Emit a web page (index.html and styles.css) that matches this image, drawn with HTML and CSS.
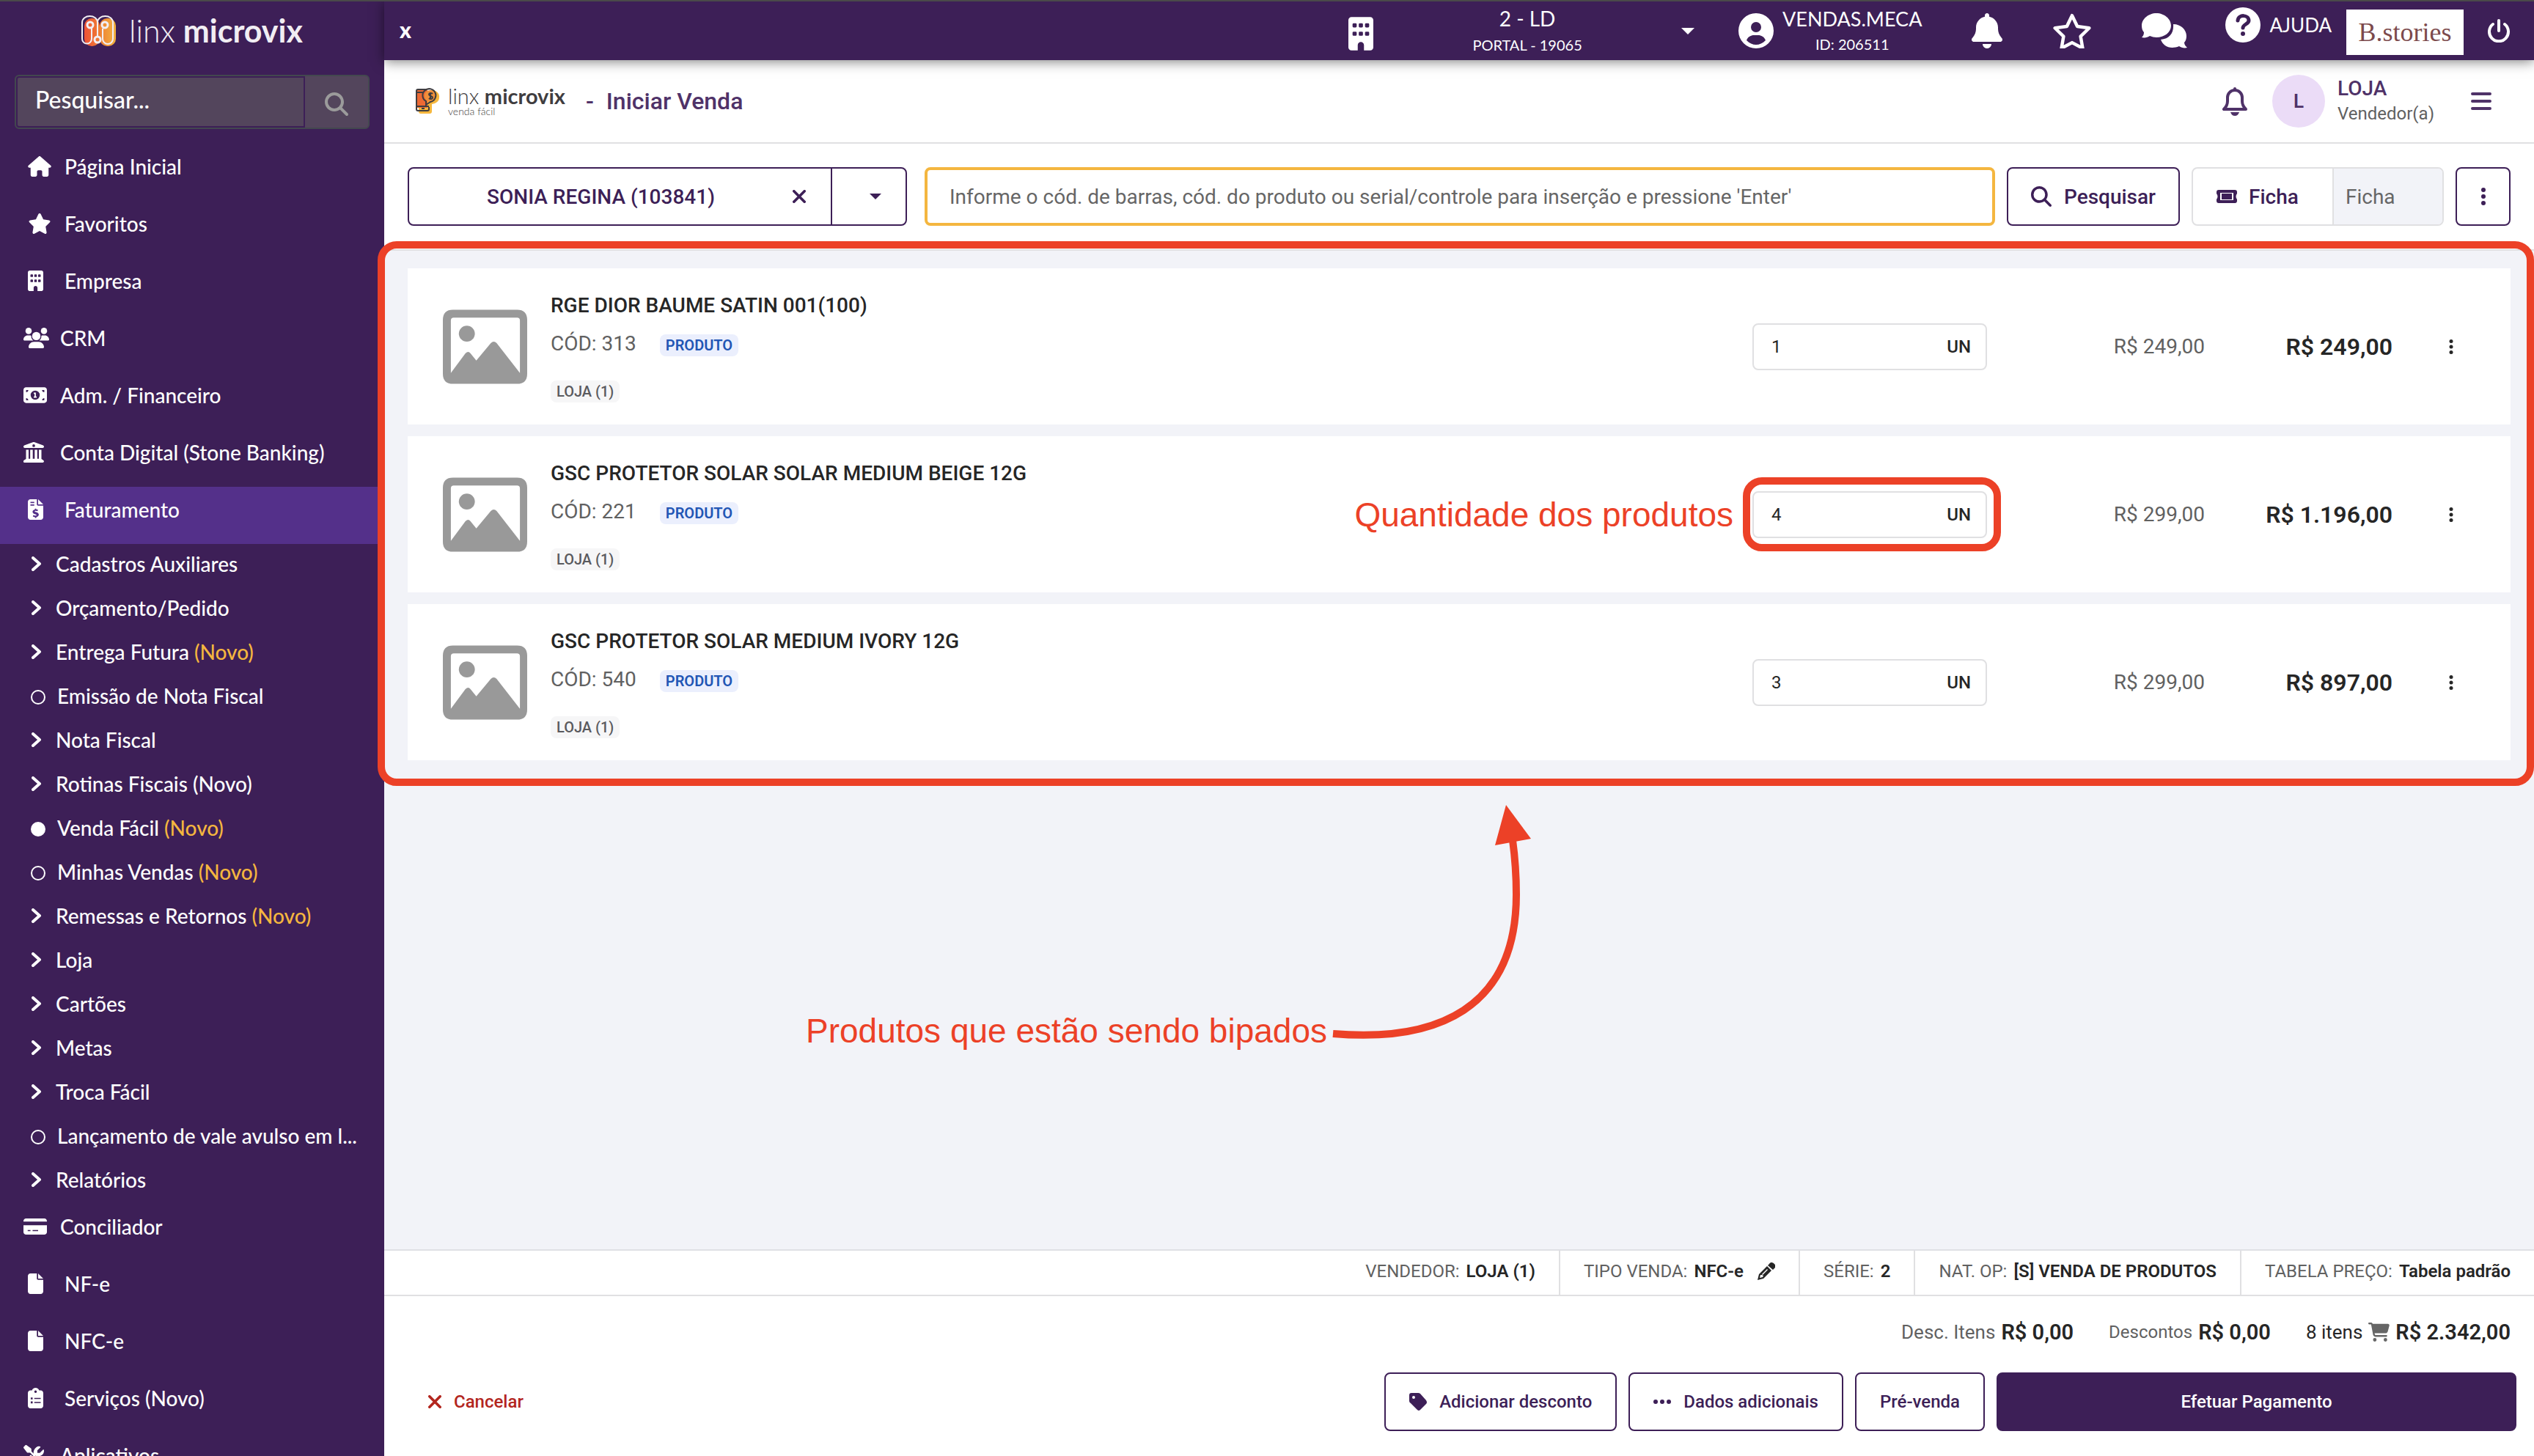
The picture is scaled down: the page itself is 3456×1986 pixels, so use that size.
FILE: index.html
```html
<!DOCTYPE html>
<html lang="pt-BR">
<head>
<meta charset="utf-8">
<title>Linx Microvix - Iniciar Venda</title>
<link rel="stylesheet" href="styles.css">
</head>
<body>
<svg class="sprite" aria-hidden="true">
  <symbol id="i-house" viewBox="0 0 576 512"><path d="M575.8 255.500c0 18-15 32.100-32 32.100h-32l.7 160.200c0 2.700-.2 5.400-.5 8.100V472c0 22.100-17.900 40-40 40H392c-22.100 0-40-17.900-40-40V384c0-17.700-14.300-32-32-32h-64c-17.700 0-32 14.300-32 32v88c0 22.100-17.900 40-40 40h-80c-22.100 0-40-17.900-40-40V287.600H32c-18 0-32-14-32-32.100 0-9 3-17 10-24L266.400 8c7-7 15-8 22-8s15 2 21 7L564.800 231.500c8 7 12 15 11 24z"/></symbol>
  <symbol id="i-star" viewBox="0 0 576 512"><path d="M316.900 18C311.600 7 300.400 0 288.100 0s-23.400 7-28.800 18L195 150.300 51.400 171.500c-12 1.800-22 10.200-25.700 21.700s-.7 24.200 7.900 32.700L137.800 329l-24.600 145.700c-2 12 3 24.200 12.900 31.300s23 8 33.800 2.300l128.300-68.500 128.300 68.500c10.800 5.700 23.900 4.900 33.800-2.300s14.900-19.300 12.900-31.300L438.500 329l104.200-103.100c8.600-8.500 11.700-21.200 7.900-32.700s-13.700-19.900-25.700-21.700l-143.700-21.200z"/></symbol>
  <symbol id="i-star-o" viewBox="0 0 576 512"><path d="M288 34l76 157 173 25-125 122 30 172-154-82-154 82 30-172L39 216l173-25z" fill="none" stroke="currentColor" stroke-width="48" stroke-linejoin="round"/></symbol>
  <symbol id="i-building" viewBox="0 0 384 512"><path fill-rule="evenodd" d="M48 0h288c26 0 48 22 48 48v416c0 26-22 48-48 48h-96v-80c0-26-22-48-48-48s-48 22-48 48v80H48c-26 0-48-22-48-48V48C0 22 22 0 48 0zM80 96h32q16 0 16 16v32q0 16-16 16H80q-16 0-16-16v-32q0-16 16-16zM176 96h32q16 0 16 16v32q0 16-16 16h-32q-16 0-16-16v-32q0-16 16-16zM272 96h32q16 0 16 16v32q0 16-16 16h-32q-16 0-16-16v-32q0-16 16-16zM80 224h32q16 0 16 16v32q0 16-16 16H80q-16 0-16-16v-32q0-16 16-16zM176 224h32q16 0 16 16v32q0 16-16 16h-32q-16 0-16-16v-32q0-16 16-16zM272 224h32q16 0 16 16v32q0 16-16 16h-32q-16 0-16-16v-32q0-16 16-16z"/></symbol>
  <symbol id="i-users" viewBox="0 0 640 512"><circle cx="128" cy="80" r="78"/><circle cx="512" cy="80" r="78"/><circle cx="320" cy="208" r="104"/><path d="M0 298c0-59 48-106 107-106h42c16 0 31 3 45 9-4 40 6 84 52 119H21c-12 0-21-10-21-22zM640 298c0-59-48-106-107-106h-42c-16 0-31 3-45 9 4 40-6 84-52 119h225c12 0 21-10 21-22zM128 485c0-73 60-133 133-133h117c74 0 134 60 134 133 0 15-12 27-27 27H155c-15 0-27-12-27-27z"/></symbol>
  <symbol id="i-money" viewBox="0 0 576 384"><path fill-rule="evenodd" d="M64 0h448c35 0 64 29 64 64v256c0 35-29 64-64 64H64c-35 0-64-29-64-64V64C0 29 29 0 64 0zM64 64v56c31 0 56-25 56-56zM64 320h56c0-31-25-56-56-56zM512 64h-56c0 31 25 56 56 56zM512 264c-31 0-56 25-56 56h56zM288 80a112 112 0 1 0 0 224 112 112 0 1 0 0-224zM252 128h52v96h20v32h-72v-32h20v-64h-20z"/></symbol>
  <symbol id="i-bank" viewBox="0 0 512 512"><path fill-rule="evenodd" d="M244 2q12-4 24 0l224 80c32 14 24 62-12 62H32C-4 144-12 96 20 82zM256 56a34 34 0 1 0 0 68 34 34 0 1 0 0-68zM64 192h64v224h40V192h64v224h48V192h64v224h40V192h64v228l46 32c34 26 10 60-14 60H24c-30 0-38-40-10-58l50-34z"/></symbol>
  <symbol id="i-invoice" viewBox="0 0 384 512"><path fill-rule="evenodd" d="M64 0h160v128c0 18 14 32 32 32h128v288c0 35-29 64-64 64H64c-35 0-64-29-64-64V64C0 29 29 0 64 0zM256 0l128 128H256zM64 64v32h96V64zM64 128v32h96v-32zM176 232v24c-84 20-76 104 12 118 40 8 30 34 4 34-22 0-44-10-56-16l-12 36c16 8 32 12 52 16v24h36v-24c92-22 74-110-8-124-50-10-36-34-8-32 16 0 32 6 46 10l10-38c-12-4-28-8-44-10v-18z"/></symbol>
  <symbol id="i-file" viewBox="0 0 384 512"><path d="M0 64C0 29 29 0 64 0h160v128c0 18 14 32 32 32h128v288c0 35-29 64-64 64H64c-35 0-64-29-64-64zM384 128H256V0z"/></symbol>
  <symbol id="i-clip" viewBox="0 0 384 512"><path fill-rule="evenodd" d="M192 0c42 0 77 27 90 64h38c35 0 64 29 64 64v320c0 35-29 64-64 64H64c-35 0-64-29-64-64V128c0-35 29-64 64-64h38c13-37 48-64 90-64zM192 64a32 32 0 1 0 0 64 32 32 0 1 0 0-64zM72 240v48h48v-48zM160 252v28h160v-28zM72 340v48h48v-48zM160 352v28h160v-28z"/></symbol>
  <symbol id="i-card" viewBox="0 0 576 400"><path fill-rule="evenodd" d="M64 0h448c35 0 64 29 64 64v16H0V64C0 29 29 0 64 0zM0 170h576v166c0 35-29 64-64 64H64c-35 0-64-29-64-64zM104 286v28h68v-28zM224 286v28h136v-28z"/></symbol>
  <symbol id="i-tools" viewBox="0 0 512 512"><path d="M78 6c-12-8-24-8-34 2L8 44c-8 10-10 24-2 34l80 104c6 8 16 12 26 12h54l104 104c-14 30-10 66 14 92l112 112c18 18 46 18 64 0l46-46c18-18 18-46 0-64L394 280c-26-24-62-28-92-14L198 162v-54c0-10-4-20-12-26z"/><path d="M506 110c6 22 8 46 2 70-16 62-72 102-132 96-28-20-62-26-94-20l-32-32c-4-66 14-130 72-170 34-24 62-24 96-14 8 2 10 12 4 18l-76 76v64h64l76-78c6-6 18-4 20-10zM20 396l164-154 76 76-140 172c-30 28-72 28-98 0s-28-66-2-94z"/></symbol>
  <symbol id="i-search" viewBox="0 0 512 512"><path d="M416 208c0 45.900-14.900 88.300-40 122.700l126.600 126.700c12.500 12.500 12.500 32.800 0 45.300s-32.800 12.500-45.300 0L330.700 376c-34.400 25.200-76.800 40-122.700 40C93.100 416 0 322.900 0 208S93.100 0 208 0s208 93.100 208 208zM208 352a144 144 0 1 0 0-288 144 144 0 1 0 0 288z"/></symbol>
  <symbol id="i-chev" viewBox="0 0 14 20"><path d="M2 2l9 8-9 8" fill="none" stroke="currentColor" stroke-width="4" stroke-linecap="round" stroke-linejoin="round"/></symbol>
  <symbol id="i-caret" viewBox="0 0 18 9"><path d="M0 0h18l-9 9z"/></symbol>
  <symbol id="i-x" viewBox="0 0 20 20"><path d="M2 2l16 16M18 2L2 18" fill="none" stroke="currentColor" stroke-width="4" stroke-linecap="round"/></symbol>
  <symbol id="i-user" viewBox="0 0 48 48"><path fill-rule="evenodd" d="M24 0a24 24 0 1 1 0 48 24 24 0 1 1 0-48zM24 12a7 7 0 1 0 0 14 7 7 0 1 0 0-14zM11 37c8 8 18 8 26 0-2-5-6-7-10-7h-6c-4 0-8 2-10 7z"/></symbol>
  <symbol id="i-bell" viewBox="0 0 448 512"><path d="M224 0c-17.700 0-32 14.300-32 32v19.200C119 66 64 130.600 64 208v18.800c0 47-17.300 92.400-48.500 127.600l-7.400 8.300c-8.400 9.400-10.400 22.900-5.300 34.400S19.400 416 32 416h384c12.600 0 24-7.400 29.200-18.900s3.100-25-5.300-34.400l-7.400-8.300C401.300 319.200 384 273.900 384 226.800V208c0-77.400-55-142-128-156.800V32c0-17.700-14.300-32-32-32zM269.300 493.300c12-12 18.700-28.300 18.700-45.300H160c0 17 6.700 33.300 18.700 45.300s28.300 18.700 45.300 18.700 33.300-6.700 45.300-18.700z"/></symbol>
  <symbol id="i-bell-o" viewBox="0 0 36 40"><path d="M18 3v2M18 5c-6 0-10 5-10 10v5c0 5-2 8-5 11h30c-3-3-5-6-5-11v-5c0-5-4-10-10-10z" fill="none" stroke="currentColor" stroke-width="4" stroke-linejoin="round" stroke-linecap="round"/><path d="M12 35h12c-1 3-3 5-6 5s-5-2-6-5z"/></symbol>
  <symbol id="i-chat" viewBox="0 0 62 48"><path d="M20 0c11 0 20 8 20 17s-9 16-20 16c-3 0-6-1-9-2-3 2-7 3-11 2 2-2 3-4 3-7C1 24 0 21 0 17 0 8 9 0 20 0z"/><path d="M43 15c11 0 18 8 18 16 0 4-1 7-3 9 0 3 2 5 4 7-4 1-8 0-11-2-12 5-22 0-25-9 12-1 18-9 17-21z"/></symbol>
  <symbol id="i-help" viewBox="0 0 48 48"><circle cx="24" cy="24" r="24"/><path d="M17 18c1-9 15-8 15 0 0 5-8 5-8 10" fill="none" stroke="#3d1f57" stroke-width="5" stroke-linecap="round"/><circle cx="24" cy="36" r="3" fill="#3d1f57"/></symbol>
  <symbol id="i-power" viewBox="0 0 32 32"><path d="M16 2v14M8 7a13 13 0 1 0 16 0" fill="none" stroke="currentColor" stroke-width="4" stroke-linecap="round"/></symbol>
  <symbol id="i-menu" viewBox="0 0 28 24"><path d="M2 2h24M2 12h24M2 22h24" stroke="currentColor" stroke-width="4" stroke-linecap="round"/></symbol>
  <symbol id="i-kebab" viewBox="0 0 6 24"><circle cx="3" cy="3" r="3"/><circle cx="3" cy="12" r="3"/><circle cx="3" cy="21" r="3"/></symbol>
  <symbol id="i-dots" viewBox="0 0 24 6"><circle cx="3" cy="3" r="3"/><circle cx="12" cy="3" r="3"/><circle cx="21" cy="3" r="3"/></symbol>
  <symbol id="i-ticket" viewBox="0 0 28 18"><path fill-rule="evenodd" d="M3 0h22q3 0 3 3v2q-3 4 0 8v2q0 3-3 3H3q-3 0-3-3v-2q3-4 0-8V3q0-3 3-3zM5 4v10h18V4zM7 5h14v8H7z"/></symbol>
  <symbol id="i-image" viewBox="0 0 116 102"><path fill-rule="evenodd" d="M14 0h88q14 0 14 14v74q0 14-14 14H14Q0 102 0 88V14Q0 0 14 0zM15 11q-4 0-4 4v72l20-27q4-4 7 0l8 10 20-24q4-4 8 0l32 41V15q0-4-4-4z"/><circle cx="33" cy="33" r="11"/></symbol>
  <symbol id="i-pencil" viewBox="0 0 24 24"><path fill-rule="evenodd" d="M16 2c2-3 5-2 7 0s2 4 0 6l-2 2-7-6zM13 5l6 6L8 22l-8 2 2-8zM4 17l-1 4 4-1 1-2-2-1zM13 9l-7 7 1 1 7-7z"/></symbol>
  <symbol id="i-tag" viewBox="0 0 24 24"><path fill-rule="evenodd" d="M0 3q0-3 3-3h9q2 0 3 1l8 9q2 3 0 5l-8 8q-2 2-4 0l-9-9q-2-1-2-3zM6 4a2 2 0 1 0 0 4 2 2 0 1 0 0-4z"/></symbol>
  <symbol id="i-cart" viewBox="0 0 576 512"><path d="M0 24C0 10.700 10.700 0 24 0h45.500c22 0 41.500 12.800 50.600 32h411c26.300 0 45.500 25 38.600 50.400l-41 152.300c-8.500 31.400-37 53.300-69.500 53.300H170.700l5.400 28.500c2.200 11.300 12.100 19.500 23.600 19.500H488c13.300 0 24 10.700 24 24s-10.700 24-24 24H199.700c-34.600 0-64.300-24.600-70.700-58.500L77.400 54.500c-.7-3.800-4-6.500-7.900-6.500H24C10.700 48 0 37.300 0 24zM128 464a48 48 0 1 1 96 0 48 48 0 1 1-96 0zM464 416a48 48 0 1 1 0 96 48 48 0 1 1 0-96z"/></symbol>
</svg>

<aside class="sidebar">
  <a class="brand" href="#">
    <svg class="brand-mark" viewBox="0 0 48 44" aria-hidden="true">
      <defs>
        <linearGradient id="g1"><stop offset="0" stop-color="#ee5136"/><stop offset="1" stop-color="#ef7d35"/></linearGradient>
        <linearGradient id="g2"><stop offset="0" stop-color="#ee8035"/><stop offset="1" stop-color="#f3b33f"/></linearGradient>
      </defs>
      <rect x="5" y="5" width="21" height="38" rx="10" fill="url(#g1)"/>
      <rect x="26" y="5" width="22" height="38" rx="10" fill="url(#g2)"/>
      <g fill="none" stroke="#f1eef3" stroke-width="2">
        <path d="M15 19v14a6 6 0 0 1-13 0V11C2-1 23-1 23 11v18M23 11c0-12 21-12 21 0v22a6 6 0 0 1-14 0V19"/>
        <circle cx="13" cy="14" r="4" stroke-width="3"/><circle cx="33" cy="14" r="4" stroke-width="3"/><circle cx="23" cy="34" r="4" stroke-width="3"/>
      </g>
    </svg>
    <span class="brand-name"><span class="thin">linx</span> <b>microvix</b></span>
  </a>
  <form class="side-search">
    <input type="text" placeholder="Pesquisar..." aria-label="Pesquisar no menu">
    <button type="button" aria-label="Buscar"><svg><use href="#i-search"/></svg></button>
  </form>
  <nav>
    <ul class="menu">
      <li><a href="#"><svg style="width:32px"><use href="#i-house"/></svg>Página Inicial</a></li>
      <li><a href="#"><svg style="width:32px"><use href="#i-star"/></svg>Favoritos</a></li>
      <li><a href="#"><svg style="width:21px"><use href="#i-building"/></svg>Empresa</a></li>
      <li><a class="wide" href="#"><svg style="width:35px"><use href="#i-users"/></svg>CRM</a></li>
      <li><a class="wide" href="#"><svg style="width:32px"><use href="#i-money"/></svg>Adm. / Financeiro</a></li>
      <li><a class="wide" href="#"><svg style="width:28px"><use href="#i-bank"/></svg>Conta Digital (Stone Banking)</a></li>
      <li><a class="active" href="#"><svg style="width:21px"><use href="#i-invoice"/></svg>Faturamento</a>
        <ul class="submenu">
          <li><a href="#"><svg><use href="#i-chev"/></svg>Cadastros Auxiliares</a></li>
          <li><a href="#"><svg><use href="#i-chev"/></svg>Orçamento/Pedido</a></li>
          <li><a href="#"><svg><use href="#i-chev"/></svg><span>Entrega Futura <em>(Novo)</em></span></a></li>
          <li><a class="leaf" href="#"><i></i>Emissão de Nota Fiscal</a></li>
          <li><a href="#"><svg><use href="#i-chev"/></svg>Nota Fiscal</a></li>
          <li><a href="#"><svg><use href="#i-chev"/></svg>Rotinas Fiscais (Novo)</a></li>
          <li><a class="leaf current" href="#"><i></i><span>Venda Fácil <em>(Novo)</em></span></a></li>
          <li><a class="leaf" href="#"><i></i><span>Minhas Vendas <em>(Novo)</em></span></a></li>
          <li><a href="#"><svg><use href="#i-chev"/></svg><span>Remessas e Retornos <em>(Novo)</em></span></a></li>
          <li><a href="#"><svg><use href="#i-chev"/></svg>Loja</a></li>
          <li><a href="#"><svg><use href="#i-chev"/></svg>Cartões</a></li>
          <li><a href="#"><svg><use href="#i-chev"/></svg>Metas</a></li>
          <li><a href="#"><svg><use href="#i-chev"/></svg>Troca Fácil</a></li>
          <li><a class="leaf" href="#"><i></i>Lançamento de vale avulso em l...</a></li>
          <li><a href="#"><svg><use href="#i-chev"/></svg>Relatórios</a></li>
        </ul>
      </li>
      <li><a class="wide" href="#"><svg style="width:32px"><use href="#i-card"/></svg>Conciliador</a></li>
      <li><a href="#"><svg style="width:21px"><use href="#i-file"/></svg>NF-e</a></li>
      <li><a href="#"><svg style="width:21px"><use href="#i-file"/></svg>NFC-e</a></li>
      <li><a href="#"><svg style="width:21px"><use href="#i-clip"/></svg>Serviços (Novo)</a></li>
      <li><a class="wide" href="#"><svg style="width:28px"><use href="#i-tools"/></svg>Aplicativos</a></li>
    </ul>
  </nav>
</aside>

<div class="page">
  <header class="topbar">
    <button class="collapse" type="button">x</button>
    <button class="company" type="button">
      <svg class="ic-building"><use href="#i-building"/></svg>
      <span class="two-lines"><span>2 - LD</span><small>PORTAL - 19065</small></span>
      <svg class="ic-caret"><use href="#i-caret"/></svg>
    </button>
    <a class="user" href="#">
      <svg class="ic-round"><use href="#i-user"/></svg>
      <span class="two-lines"><span>VENDAS.MECA</span><small>ID: 206511</small></span>
    </a>
    <a class="tool" href="#" aria-label="Notificações"><svg style="width:42px"><use href="#i-bell"/></svg></a>
    <a class="tool" href="#" aria-label="Favoritos"><svg style="width:54px"><use href="#i-star-o"/></svg></a>
    <a class="tool" href="#" aria-label="Mensagens"><svg style="width:62px"><use href="#i-chat"/></svg></a>
    <a class="help" href="#"><svg class="ic-round"><use href="#i-help"/></svg>AJUDA</a>
    <span class="client-logo">B.stories</span>
    <a class="power" href="#" aria-label="Sair"><svg><use href="#i-power"/></svg></a>
  </header>

  <header class="titlebar">
    <svg class="app-mark" viewBox="0 0 32 34" aria-hidden="true">
      <path d="M4 3h15a9 9 0 0 1 13 9c0 5-4 8-10 9v10q0 3-3 3H7q-3 0-3-3z" fill="#f6b73d"/>
      <path d="M2 1h14v25H2z" fill="#ec6a34"/>
      <circle cx="20" cy="10" r="8" fill="#f0903a"/>
      <path d="M14 1H3Q1 1 1 3v25q0 2 2 2h13q2 0 2-2v-3M1 5h9M1 24h17M8 27h4M14 22v-5A9 9 0 1 1 20 18zM23 7c-2-2-5-1-5 1s5 2 5 4-3 3-5 1M20 5v10" fill="none" stroke="#3f3d40" stroke-width="2"/>
    </svg>
    <span class="app-name"><span><span class="thin">linx</span> <b>microvix</b></span><small>venda fácil</small></span>
    <h1><span>-</span>Iniciar Venda</h1>
    <button class="bare" type="button" aria-label="Avisos"><svg class="ic-bell"><use href="#i-bell-o"/></svg></button>
    <span class="avatar">L</span>
    <span class="seller"><strong>LOJA</strong><small>Vendedor(a)</small></span>
    <button class="bare" type="button" aria-label="Menu"><svg class="ic-menu"><use href="#i-menu"/></svg></button>
  </header>

  <div class="toolbar">
    <div class="customer">
      <button class="customer-name" type="button"><span>SONIA REGINA (103841)</span><svg class="ic-x"><use href="#i-x"/></svg></button>
      <button class="customer-more" type="button" aria-label="Opções do cliente"><svg><use href="#i-caret"/></svg></button>
    </div>
    <input class="barcode" type="text" aria-label="Código do produto" placeholder="Informe o cód. de barras, cód. do produto ou serial/controle para inserção e pressione 'Enter'">
    <button class="btn btn-search" type="button"><svg><use href="#i-search"/></svg>Pesquisar</button>
    <div class="ficha">
      <label for="ficha"><svg><use href="#i-ticket"/></svg>Ficha</label>
      <input id="ficha" type="text" placeholder="Ficha">
    </div>
    <button class="btn btn-kebab" type="button" aria-label="Mais"><svg><use href="#i-kebab"/></svg></button>
  </div>

  <main class="workspace">
    <section class="products">
      <article class="product">
        <svg class="thumb"><use href="#i-image"/></svg>
        <div class="info">
          <h2>RGE DIOR BAUME SATIN 001(100)</h2>
          <p><span>CÓD: 313</span><span class="badge">PRODUTO</span></p>
          <span class="store">LOJA (1)</span>
        </div>
        <label class="qty"><input type="text" value="1" aria-label="Quantidade"><span>UN</span></label>
        <span class="unit-price">R$ 249,00</span>
        <strong class="total-price">R$ 249,00</strong>
        <button class="bare" type="button" aria-label="Opções do item"><svg class="ic-kebab"><use href="#i-kebab"/></svg></button>
      </article>
      <article class="product">
        <svg class="thumb"><use href="#i-image"/></svg>
        <div class="info">
          <h2>GSC PROTETOR SOLAR SOLAR MEDIUM BEIGE 12G</h2>
          <p><span>CÓD: 221</span><span class="badge">PRODUTO</span></p>
          <span class="store">LOJA (1)</span>
        </div>
        <div class="marked">
          <label class="qty"><input type="text" value="4" aria-label="Quantidade"><span>UN</span></label>
          <div class="ring ring-qty"></div>
          <span class="note note-qty">Quantidade dos produtos</span>
        </div>
        <span class="unit-price">R$ 299,00</span>
        <strong class="total-price">R$ 1.196,00</strong>
        <button class="bare" type="button" aria-label="Opções do item"><svg class="ic-kebab"><use href="#i-kebab"/></svg></button>
      </article>
      <article class="product">
        <svg class="thumb"><use href="#i-image"/></svg>
        <div class="info">
          <h2>GSC PROTETOR SOLAR MEDIUM IVORY 12G</h2>
          <p><span>CÓD: 540</span><span class="badge">PRODUTO</span></p>
          <span class="store">LOJA (1)</span>
        </div>
        <label class="qty"><input type="text" value="3" aria-label="Quantidade"><span>UN</span></label>
        <span class="unit-price">R$ 299,00</span>
        <strong class="total-price">R$ 897,00</strong>
        <button class="bare" type="button" aria-label="Opções do item"><svg class="ic-kebab"><use href="#i-kebab"/></svg></button>
      </article>
      <div class="ring ring-list"></div>
      <div class="callout">
        <span class="note">Produtos que estão sendo bipados</span>
        <svg class="arrow" viewBox="0 0 280 330" aria-hidden="true">
          <path d="M8 312C150 324 258 278 258 122C258 96 256 70 253 48" fill="none" stroke="#ec4127" stroke-width="10"/>
          <path d="M244 0l34 46-49 9z" fill="#ec4127"/>
        </svg>
      </div>
    </section>
  </main>

  <footer class="footer">
    <dl class="facts">
      <div><dt>VENDEDOR:</dt><dd>LOJA (1)</dd></div>
      <div><dt>TIPO VENDA:</dt><dd>NFC-e</dd><svg><use href="#i-pencil"/></svg></div>
      <div><dt>SÉRIE:</dt><dd>2</dd></div>
      <div><dt>NAT. OP:</dt><dd>[S] VENDA DE PRODUTOS</dd></div>
      <div><dt>TABELA PREÇO:</dt><dd>Tabela padrão</dd></div>
    </dl>
    <dl class="totals">
      <div><dt class="lg">Desc. Itens</dt><dd>R$ 0,00</dd></div>
      <div><dt>Descontos</dt><dd>R$ 0,00</dd></div>
      <div><dt class="lg dark">8 itens</dt><svg><use href="#i-cart"/></svg><dd>R$ 2.342,00</dd></div>
    </dl>
    <div class="actions">
      <button class="cancel" type="button"><svg><use href="#i-x"/></svg>Cancelar</button>
      <button class="btn" type="button"><svg class="ic-tag"><use href="#i-tag"/></svg>Adicionar desconto</button>
      <button class="btn" type="button"><svg class="ic-dots"><use href="#i-dots"/></svg>Dados adicionais</button>
      <button class="btn" type="button">Pré-venda</button>
      <button class="btn btn-pay" type="button">Efetuar Pagamento</button>
    </div>
  </footer>
</div>
</body>
</html>
```
FILE: styles.css
```css
:root {
  --purple: #3d1f57;
  --plum: #4f3268;
  --red: #ec4127;
  --line: #e0e0e2;
  --grey: #616161;
  --ink: #262626;
  --canvas: #f2f3f8;
}
* { box-sizing: border-box; }
body {
  margin: 0;
  height: 100vh;
  overflow: hidden;
  display: grid;
  grid-template-columns: 524px 1fr;
  border-top: 2px solid #4a4a4a;
  background: #fff;
  color: var(--ink);
  font-family: Roboto, "Liberation Sans", sans-serif;
  font-size: 28px;
}
button, input { font: inherit; color: inherit; }
button { background: none; border: 0; padding: 0; display: flex; align-items: center; justify-content: center; }
a { color: inherit; text-decoration: none; }
ul, dl, dd, h1, h2, p { margin: 0; padding: 0; list-style: none; }
svg { fill: currentColor; flex: none; overflow: visible; }
.sprite { position: absolute; width: 0; height: 0; }
.thin { font-weight: 300; }

/* Sidebar */
.sidebar {
  background: var(--purple);
  color: #fff;
  font-family: Lato, "Open Sans", sans-serif;
  font-weight: 500;
  overflow: hidden;
}
.brand { display: flex; align-items: center; gap: 18px; height: 100px; padding: 0 0 20px 110px; color: #f1eef3; }
.brand-mark { width: 48px; height: 44px; }
.brand-name { font-size: 43px; line-height: 48px; }
.side-search {
  display: flex;
  height: 74px;
  margin: 0 20px 20px;
  border: 2px solid #43484f;
  border-radius: 6px;
  background: #53455c;
}
.side-search input {
  flex: 1;
  min-width: 0;
  margin: 0;
  padding: 0 24px 8px;
  border: 2px solid var(--purple);
  border-radius: 4px 0 0 4px;
  background: transparent;
  font-size: 32px;
}
.side-search input::placeholder { color: #fff; opacity: 1; }
.side-search button { width: 86px; color: #9b9b9b; }
.side-search svg { width: 32px; height: 32px; margin-top: 6px; }
.menu a { display: grid; grid-template-columns: 50px 1fr; align-items: center; height: 78px; padding: 0 0 16px 38px; white-space: nowrap; }
.menu a.wide { padding-left: 32px; }
.menu svg { height: 28px; }
.menu a.active { background: #54308a; }
.menu .submenu a { grid-template-columns: 33px 1fr; height: 60px; padding: 0 0 6px 43px; }
.menu .submenu svg { width: 14px; height: 20px; }
.menu .submenu .leaf { grid-template-columns: 36px 1fr; padding-left: 42px; }
.submenu i { width: 20px; height: 20px; margin-top: 4px; border: 2px solid #fff; border-radius: 50%; }
.submenu .current i { background: #fff; }
.submenu em { color: #f4b63f; font-style: normal; }

/* Top bar */
.page { display: flex; flex-direction: column; min-width: 0; }
.topbar {
  display: flex;
  align-items: center;
  height: 80px;
  padding: 0 32px 0 21px;
  background: var(--purple);
  color: #fff;
  font-family: Lato, "Open Sans", sans-serif;
  box-shadow: 0 2px 16px rgba(0, 0, 0, .5);
}
.collapse { font-weight: 900; font-size: 30px; padding: 0 0 4px; }
.company { margin-left: auto; }
.company .two-lines { width: 420px; }
.ic-building { width: 34px; height: 46px; margin-top: 8px; }
.ic-caret { width: 18px; height: 9px; }
.two-lines { display: flex; flex-direction: column; align-items: center; font-size: 28px; line-height: 38px; }
.two-lines small { font-size: 20px; line-height: 34px; }
.user { display: flex; align-items: center; gap: 12px; margin-left: 60px; }
.user .two-lines { font-size: 27px; line-height: 36px; }
.user small { line-height: 32px; }
.ic-round { width: 48px; height: 48px; }
.tool { margin-left: 68px; display: flex; }
.tool svg { height: 48px; }
.help { display: flex; align-items: center; gap: 12px; margin-left: 52px; padding-bottom: 16px; font-size: 26px; }
.client-logo {
  display: grid;
  place-items: center;
  width: 160px;
  height: 62px;
  margin: 4px 0 0 20px;
  background: #fff;
  color: #7c4a4c;
  font-family: "Liberation Serif", serif;
  font-size: 36px;
}
.power { display: flex; margin-left: 32px; }
.power svg { width: 32px; height: 32px; }

/* Title bar */
.titlebar { display: flex; align-items: center; height: 114px; padding: 0 58px 0 43px; border-bottom: 2px solid var(--line); color: var(--plum); }
.app-mark { width: 32px; height: 34px; }
.app-name { display: flex; flex-direction: column; margin: 0 28px 0 12px; font-family: Lato, sans-serif; color: #3f3d40; font-size: 29px; line-height: 28px; }
.app-name small { font-size: 14px; line-height: 14px; font-weight: 300; }
h1 { flex: 1; display: flex; gap: 17px; font-size: 32px; line-height: 40px; font-weight: 500; }
.ic-bell { width: 36px; height: 40px; }
.avatar { display: grid; place-items: center; width: 72px; height: 72px; margin: 0 17px 0 33px; border-radius: 50%; background: #ebdcf7; font-weight: 600; font-size: 26px; }
.seller { display: flex; flex-direction: column; margin-right: 50px; line-height: 34px; }
.seller strong { font-weight: 500; }
.seller small { font-size: 24px; color: var(--grey); }
.ic-menu { width: 28px; height: 24px; }

/* Toolbar */
.toolbar { display: flex; height: 146px; padding: 32px; gap: 16px; border-bottom: 2px solid var(--line); color: var(--purple); font-weight: 500; }
.customer { display: flex; width: 681px; margin-right: 8px; border: 2px solid var(--purple); border-radius: 8px; }
.customer-name { flex: 1; padding: 0 34px 0 0; border-right: 2px solid var(--purple); }
.customer-name span { flex: 1; }
.customer-name .ic-x { width: 18px; height: 18px; }
.customer-more { width: 100px; padding-left: 18px; }
.customer-more svg { width: 16px; height: 8px; }
.barcode { flex: 1; min-width: 0; padding: 0 30px; border: 4px solid #f4b63f; border-radius: 8px; outline: 0; font-weight: 400; background: #fff; }
.toolbar input::placeholder { color: #666; opacity: 1; }
.btn { height: 80px; padding: 0 32px; gap: 17px; border: 2px solid var(--purple); border-radius: 8px; color: var(--purple); font-weight: 500; white-space: nowrap; }
.btn-search { padding: 0 31px; }
.btn-search svg { width: 28px; height: 28px; }
.ficha { display: flex; width: 344px; border: 2px solid var(--line); border-radius: 8px; overflow: hidden; }
.ficha label { display: flex; align-items: center; gap: 16px; width: 192px; padding-left: 32px; border-right: 2px solid var(--line); }
.ficha svg { width: 28px; height: 18px; }
.ficha input { flex: 1; min-width: 0; padding: 0 16px; border: 0; background: var(--canvas); font-weight: 400; }
.btn-kebab { width: 75px; padding: 0; }
.btn-kebab svg { width: 6px; height: 24px; }

/* Products */
.workspace { flex: 1; background: var(--canvas); }
.products { position: relative; display: flex; flex-direction: column; gap: 16px; padding: 24px 32px; }
.product {
  display: grid;
  grid-template-columns: 115px 1fr 320px 297px 256px 80px;
  align-items: center;
  height: 213px;
  padding: 0 81px 0 48px;
  background: #fff;
}
.thumb { width: 115px; height: 102px; color: #999; }
.info { padding: 2px 0 0 32px; }
.info h2 { font-size: 28px; line-height: 36px; font-weight: 500; }
.info p { display: flex; align-items: center; gap: 32px; margin-top: 14px; line-height: 40px; color: var(--grey); }
.badge, .store { font-size: 20px; font-weight: 500; line-height: 30px; border-radius: 8px; padding: 0 8px; }
.badge { margin-top: 4px; background: #ebeffd; color: #2256b5; font-weight: 600; }
.store { display: inline-block; margin: 30px 0 0; background: #f6f6f7; color: #5a5a5e; }
.qty { display: flex; align-items: center; width: 320px; height: 64px; padding: 0 20px 0 24px; border: 2px solid var(--line); border-radius: 8px; font-size: 24px; }
.qty input { flex: 1; min-width: 0; padding: 0; border: 0; background: none; }
.qty span { font-weight: 500; }
.unit-price, .total-price { text-align: right; }
.unit-price { color: var(--grey); }
.total-price { font-size: 32px; font-weight: 600; }
.bare { color: inherit; }
.ic-kebab { width: 6px; height: 20px; }
.product .bare { padding-left: 80px; }

/* Tutorial marks drawn over the screen */
.ring { position: absolute; border: 10px solid var(--red); border-radius: 26px; pointer-events: none; }
.ring-list { inset: -13px 0 -11px -9px; }
.marked { position: relative; }
.ring-qty { inset: -19px -19px -18px -13px; }
.note { font-family: "Liberation Sans", Arial, sans-serif; font-size: 46px; line-height: 44px; color: var(--red); white-space: nowrap; }
.note-qty { position: absolute; right: 346px; top: 10px; }
.callout { position: absolute; left: 575px; top: 756px; display: flex; align-items: flex-end; }
.arrow { width: 280px; height: 330px; }

/* Footer */
.footer { padding-bottom: 34px; }
.facts, .totals { display: flex; justify-content: flex-end; }
.facts { height: 64px; border-top: 2px solid #dfe0e5; border-bottom: 2px solid var(--line); font-size: 24px; }
.facts > div { display: flex; align-items: center; gap: 9px; padding: 0 32px 4px; border-left: 2px solid var(--line); }
.facts > div:first-child { border-left: 0; }
.facts svg { width: 24px; height: 24px; margin-left: 10px; }
dt { color: var(--grey); }
dd { font-weight: 600; }
.totals { gap: 48px; height: 104px; padding: 0 32px 6px; }
.totals > div { display: flex; align-items: center; gap: 8px; }
.totals dt { font-size: 24px; }
.totals dt.lg { font-size: 26px; }
.totals dt.dark { color: var(--ink); }
.totals dd { font-size: 29px; }
.totals svg { width: 29px; height: 26px; color: #666; }
.actions { display: flex; gap: 16px; padding: 0 24px 0 60px; font-size: 24px; }
.actions .btn { font-size: 24px; }
.cancel { gap: 17px; margin-right: auto; color: #b3261e; font-weight: 500; }
.cancel svg { width: 18px; height: 18px; }
.ic-tag { width: 24px; height: 24px; }
.ic-dots { width: 24px; height: 6px; }
.actions .btn-pay { width: 709px; background: var(--purple); color: #fff; }
```
